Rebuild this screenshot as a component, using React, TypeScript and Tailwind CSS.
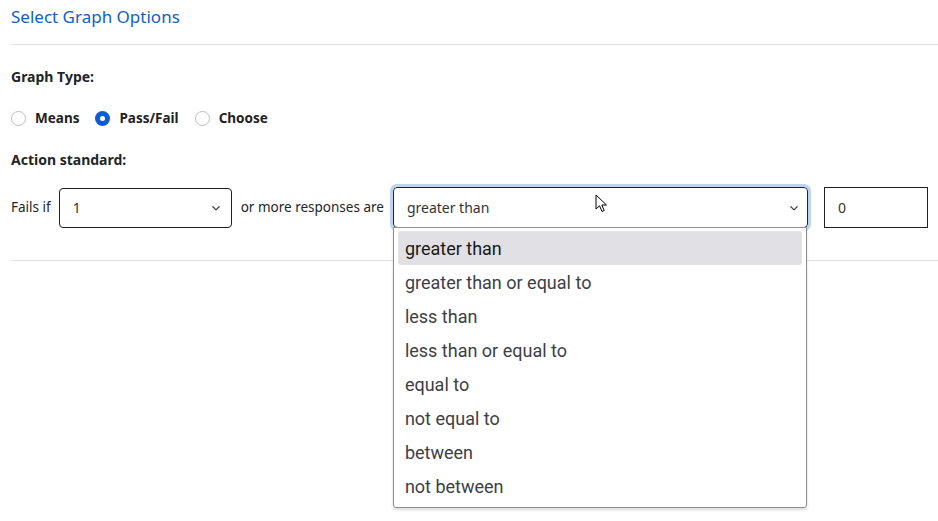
import React from 'react';

const options = [
  'greater than',
  'greater than or equal to',
  'less than',
  'less than or equal to',
  'equal to',
  'not equal to',
  'between',
  'not between',
];

function Chevron() {
  return (
    <svg className="w-[10px] h-[10px]" viewBox="0 0 16 16" fill="none" stroke="#444" strokeWidth={2} strokeLinecap="round" strokeLinejoin="round">
      <path d="M3 6l5 5 5-5" />
    </svg>
  );
}

function Radio({ label, checked }: { label: string; checked?: boolean }) {
  return (
    <label className="flex items-center mr-[16px]">
      {checked ? (
        <span className="w-[15px] h-[15px] rounded-full bg-[#0b5cd7] flex items-center justify-center">
          <span className="w-[5px] h-[5px] rounded-full bg-white" />
        </span>
      ) : (
        <span className="w-[15px] h-[15px] rounded-full border border-[#b9bcc0] bg-white" />
      )}
      <span className="ml-[9px] text-[13.5px] font-bold text-[#222]">{label}</span>
    </label>
  );
}

export default function App() {
  return (
    <div className="w-[938px] h-[521px] bg-white relative overflow-hidden font-['Noto_Sans',sans-serif] text-[#212529]">
      <div className="pl-[11px]">
        <div className="h-[44px] pt-[4px] text-[17px] text-[#1060c8]">Select Graph Options</div>
        <div className="h-px bg-[#dee2e6]" />

        <div className="mt-[20px] h-[22px] flex items-center text-[14px] font-bold">Graph Type:</div>

        <div className="mt-[20px] h-[22px] flex items-center">
          <Radio label="Means" />
          <Radio label="Pass/Fail" checked />
          <Radio label="Choose" />
        </div>

        <div className="mt-[19px] h-[22px] flex items-center text-[14px] font-bold">Action standard:</div>

        <div className="mt-[17px] flex items-center h-[41px]">
          <span className="text-[13.5px] mr-[8px]">Fails if</span>
          <div className="w-[173px] h-[40px] border border-[#222] rounded-[4px] flex items-center justify-between pl-[13px] pr-[10px] text-[14px] text-[#333]">
            <span>1</span>
            <Chevron />
          </div>
          <span className="text-[13.5px] ml-[9px] mr-[9px]">or more responses are</span>
          <div className="relative">
            <div className="w-[415px] h-[41px] border border-[#222] rounded-[4px] outline-[3px] outline outline-[#bcd4f0] flex items-center justify-between pl-[13px] pr-[8px] text-[14px] text-[#333]">
              <span>greater than</span>
              <Chevron />
            </div>
            <div className="absolute left-0 top-[40px] w-[414px] bg-white border border-[#8f8f8f] rounded-b-[3px] shadow-[0_2px_3px_rgba(0,0,0,0.15)] z-10 px-[4px] pt-[3px] pb-[4px] font-['Roboto',sans-serif] text-[18px] text-[#3c4046]">
              {options.map((o, i) => (
                <div
                  key={o}
                  className={`h-[34px] flex items-center px-[7px] rounded-[3px] ${i === 0 ? 'bg-[#e1e0e5] text-[#1a1a1a]' : ''}`}
                >
                  {o}
                </div>
              ))}
            </div>
          </div>
          <div className="ml-[16px] w-[104px] h-[41px] border border-[#222] flex items-center pl-[13px] text-[14px] text-[#333]">0</div>
        </div>

        <div className="mt-[32px] h-px bg-[#dee2e6]" />
      </div>

      <svg className="absolute left-[595px] top-[194px] z-20" width="14" height="20" viewBox="0 0 14 20">
        <path d="M1 1 L1 15 L4.5 11.8 L7 17.5 L9.2 16.5 L6.8 11 L11.5 11 Z" fill="white" stroke="black" strokeWidth="1" strokeLinejoin="round" />
      </svg>
    </div>
  );
}
